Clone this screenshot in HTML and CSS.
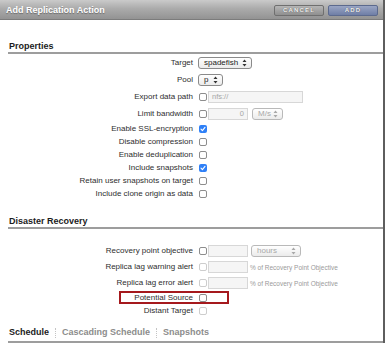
FILE: index.html
```html
<!DOCTYPE html>
<html>
<head>
<meta charset="utf-8">
<title>Add Replication Action</title>
<link rel="stylesheet" href="styles.css">
</head>
<body>
<div class="dialog">
  <div class="titlebar">
    <span class="title">Add Replication Action</span>
    <div class="actions">
      <button class="btn btn-cancel">CANCEL</button>
      <button class="btn btn-add">ADD</button>
    </div>
  </div>
  <div class="content">
    <h2 class="section-title">Properties</h2>
    <div class="form">
      <div class="row tall">
        <span class="lbl">Target</span>
        <span class="select w-target"><span>spadefish</span><svg class="arr" viewBox="0 0 5 8" width="5" height="8"><path d="M2.5 0.5 L4.5 3 L0.5 3 Z M2.5 7.5 L4.5 5 L0.5 5 Z"/></svg></span>
      </div>
      <div class="row tall">
        <span class="lbl">Pool</span>
        <span class="select w-pool"><span>p</span><svg class="arr" viewBox="0 0 5 8" width="5" height="8"><path d="M2.5 0.5 L4.5 3 L0.5 3 Z M2.5 7.5 L4.5 5 L0.5 5 Z"/></svg></span>
      </div>
      <div class="row tall">
        <span class="lbl">Export data path</span>
        <span class="cb"></span>
        <span class="input w-path">nfs://</span>
      </div>
      <div class="row tall">
        <span class="lbl">Limit bandwidth</span>
        <span class="cb"></span>
        <span class="input w-num num">0</span>
        <span class="select disabled w-unit"><span>M/s</span><svg class="arr" viewBox="0 0 5 8" width="5" height="8"><path d="M2.5 0.5 L4.5 3 L0.5 3 Z M2.5 7.5 L4.5 5 L0.5 5 Z"/></svg></span>
      </div>
      <div class="row">
        <span class="lbl">Enable SSL-encryption</span>
        <span class="cb checked"><svg viewBox="0 0 8 8" width="8" height="8"><path d="M2 4.2 L3.4 5.6 L6 2.4" fill="none" stroke="#fff" stroke-width="1.1" stroke-linecap="round" stroke-linejoin="round"/></svg></span>
      </div>
      <div class="row">
        <span class="lbl">Disable compression</span>
        <span class="cb"></span>
      </div>
      <div class="row">
        <span class="lbl">Enable deduplication</span>
        <span class="cb"></span>
      </div>
      <div class="row">
        <span class="lbl">Include snapshots</span>
        <span class="cb checked"><svg viewBox="0 0 8 8" width="8" height="8"><path d="M2 4.2 L3.4 5.6 L6 2.4" fill="none" stroke="#fff" stroke-width="1.1" stroke-linecap="round" stroke-linejoin="round"/></svg></span>
      </div>
      <div class="row">
        <span class="lbl">Retain user snapshots on target</span>
        <span class="cb"></span>
      </div>
      <div class="row">
        <span class="lbl">Include clone origin as data</span>
        <span class="cb"></span>
      </div>
    </div>

    <h2 class="section-title dr">Disaster Recovery</h2>
    <div class="form dr-form">
      <div class="row tall">
        <span class="lbl">Recovery point objective</span>
        <span class="cb"></span>
        <span class="input w-num"></span>
        <span class="select disabled w-hours"><span>hours</span><svg class="arr" viewBox="0 0 5 8" width="5" height="8"><path d="M2.5 0.5 L4.5 3 L0.5 3 Z M2.5 7.5 L4.5 5 L0.5 5 Z"/></svg></span>
      </div>
      <div class="row mid">
        <span class="lbl">Replica lag warning alert</span>
        <span class="cb disabled"></span>
        <span class="input w-num"></span>
        <span class="hint">% of Recovery Point Objective</span>
      </div>
      <div class="row mid">
        <span class="lbl">Replica lag error alert</span>
        <span class="cb disabled"></span>
        <span class="input w-num"></span>
        <span class="hint">% of Recovery Point Objective</span>
      </div>
      <div class="row">
        <span class="lbl">Potential Source</span>
        <span class="cb"></span>
        <span class="highlight"></span>
      </div>
      <div class="row">
        <span class="lbl">Distant Target</span>
        <span class="cb disabled"></span>
      </div>
    </div>

    <div class="tabs">
      <span class="tab active">Schedule</span>
      <span class="tab-sep"></span>
      <span class="tab">Cascading Schedule</span>
      <span class="tab-sep"></span>
      <span class="tab">Snapshots</span>
    </div>
  </div>
</div>
</body>
</html>
```

FILE: styles.css
```css
html, body {
  margin: 0;
  padding: 0;
  background: #fff;
}

body {
  font-family: "Liberation Sans", Arial, sans-serif;
  color: #2a2a2a;
}

.dialog {
  width: 383px;
  height: 343px;
  border-right: 2px solid #5e5e5e;
  overflow: hidden;
  background: #fff;
}

.titlebar {
  box-sizing: border-box;
  height: 20px;
  display: flex;
  align-items: center;
  justify-content: space-between;
  padding: 0 5px 0 6px;
  background: linear-gradient(#cacaca, #ababab 45%, #939393);
  border-bottom: 1px solid #7c7c7c;
}

.title {
  color: #fff;
  font-weight: bold;
  font-size: 9px;
  text-shadow: 0 1px 1px rgba(0, 0, 0, 0.35);
}

.actions {
  display: flex;
  gap: 4px;
  margin-top: 1px;
}

.btn {
  width: 50px;
  height: 11px;
  padding: 0;
  border-radius: 2px;
  font-family: "Liberation Sans", Arial, sans-serif;
  font-weight: bold;
  font-size: 6px;
  letter-spacing: 1.2px;
  line-height: 9px;
  color: #f4f4f4;
  text-shadow: 0 0 1px rgba(0, 0, 0, 0.6);
}

.btn-cancel {
  border: 1px solid #6f6f6f;
  background: linear-gradient(#b6b6b6, #8f8f8f);
}

.btn-add {
  border: 1px solid #5c6a8e;
  background: linear-gradient(#9aa6c4, #6f7ea6);
}

.content {
  padding-left: 8px;
}

.section-title {
  margin: 21px 0 0;
  padding-left: 1px;
  font-size: 9px;
  line-height: 11px;
  font-weight: bold;
  color: #1c1c1c;
  border-bottom: 2px solid #9d9d9d;
}

.section-title.dr {
  margin-top: 16px;
}

.dr-form {
  margin-top: 13px;
}

.row {
  position: relative;
  display: flex;
  align-items: center;
  height: 13px;
}

.row.tall {
  height: 17px;
}

.row.mid {
  height: 16px;
}

.lbl {
  flex: none;
  width: 185px;
  margin-right: 5px;
  text-align: right;
  font-size: 8px;
  line-height: 10px;
  color: #2e2e2e;
  white-space: nowrap;
}

.cb {
  box-sizing: border-box;
  flex: none;
  width: 8px;
  height: 8px;
  margin-left: 1px;
  border: 1px solid #8d8d8d;
  border-radius: 2px;
  background: #fff;
  display: flex;
  align-items: center;
  justify-content: center;
}

.cb svg {
  display: block;
}

.cb.checked {
  border: none;
  background: #2f80f7;
}

.cb.disabled {
  border-color: #cdcdcd;
}

.input {
  box-sizing: border-box;
  flex: none;
  height: 12px;
  margin-left: 1px;
  padding: 0 3px;
  border: 1px solid #d7d7d7;
  background: #f5f5f5;
  font-size: 7.5px;
  line-height: 10px;
  color: #a6a6a6;
}

.input.num {
  text-align: right;
}

.w-path { width: 95px; }
.w-num { width: 40px; }

.select {
  box-sizing: border-box;
  flex: none;
  height: 12px;
  display: flex;
  align-items: center;
  justify-content: space-between;
  padding: 0 4px 0 5px;
  border: 1px solid #8a8a8a;
  border-radius: 3px;
  background: linear-gradient(#ffffff, #ebebeb);
  font-size: 8px;
  color: #222;
}

.select .arr {
  fill: #333;
}

.select.disabled {
  border-color: #b9b9b9;
  color: #a8a8a8;
}

.select.disabled .arr {
  fill: #a8a8a8;
}

.w-target { width: 54px; }
.w-pool { width: 25px; }
.w-unit { width: 31px; margin-left: 4px; }
.w-hours { width: 50px; margin-left: 3px; }

.hint {
  margin-left: 2px;
  font-size: 6.5px;
  color: #9a9a9a;
  white-space: nowrap;
}

.highlight {
  position: absolute;
  left: 111px;
  top: 0;
  width: 110px;
  height: 13px;
  box-sizing: border-box;
  border: 2px solid #a5191d;
}

.tabs {
  margin-top: 10px;
  display: flex;
  align-items: center;
  padding: 0 0 3px 1px;
  border-bottom: 2px solid #9d9d9d;
}

.tab {
  font-size: 9px;
  line-height: 11px;
  font-weight: bold;
  color: #8c8c8c;
  white-space: nowrap;
}

.tab.active {
  color: #1c1c1c;
}

.tab-sep {
  width: 0;
  height: 10px;
  margin: 0 6px;
  border-left: 1px dotted #c4c4c4;
}
```
